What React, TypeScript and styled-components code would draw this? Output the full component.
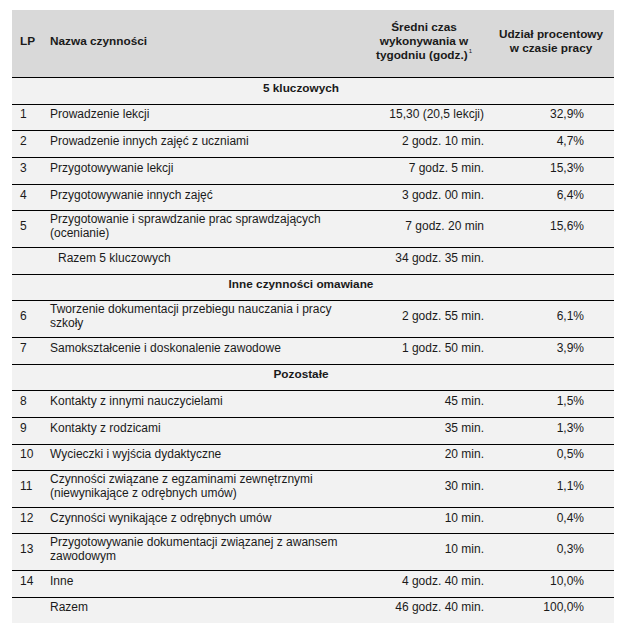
import React from "react";
import styled, { createGlobalStyle } from "styled-components";

const GlobalStyle = createGlobalStyle`
  html, body {
    margin: 0;
    padding: 0;
    background: #ffffff;
  }
  body {
    font-family: "Liberation Sans", Arial, sans-serif;
    color: #1a1a1a;
  }
`;

const Page = styled.div`
  padding: 10px 13px 0 12px;
`;

const Table = styled.div`
  width: 602px;
  display: flex;
  flex-direction: column;
`;

const cols = "38px 310px 128px 126px";

const HeaderRow = styled.div`
  display: grid;
  grid-template-columns: ${cols};
  height: 67px;
  background: #d9d9d9;
  border-bottom: 1px solid #000;
  box-sizing: content-box;
  font-weight: bold;
  font-size: 11.8px;
  line-height: 14.2px;
`;

const HeaderCell = styled.div<{ $align?: "left" | "center"; $pl?: number }>`
  display: flex;
  align-items: center;
  justify-content: ${(p) => (p.$align === "center" ? "center" : "flex-start")};
  text-align: ${(p) => p.$align ?? "left"};
  padding-left: ${(p) => p.$pl ?? 0}px;
  padding-bottom: 5px;
`;

const Sup = styled.sup`
  font-size: 6px;
  font-weight: normal;
  vertical-align: 6px;
  line-height: 0;
  margin-left: 1px;
`;

const BodyRow = styled.div<{ $last?: boolean }>`
  display: grid;
  grid-template-columns: ${cols};
  background: #f2f2f2;
  padding: 2px 0 6.7px;
  border-bottom: ${(p) => (p.$last ? "none" : "1px solid #000")};
  font-size: 12px;
  line-height: 13.4px;
`;

const Cell = styled.div<{ $right?: boolean; $pl?: number; $pr?: number }>`
  display: flex;
  align-items: center;
  min-height: 17px;
  justify-content: ${(p) => (p.$right ? "flex-end" : "flex-start")};
  padding-left: ${(p) => p.$pl ?? 0}px;
  padding-right: ${(p) => p.$pr ?? 0}px;
  white-space: pre-line;
`;

const SectionCell = styled.div`
  grid-column: 1 / -1;
  display: flex;
  align-items: center;
  justify-content: center;
  min-height: 17px;
  padding-right: 24px;
  font-weight: bold;
  font-size: 11.8px;
`;

type Item =
  | { kind: "section"; title: string }
  | { kind: "item"; lp: string; name: string; time: string; pct: string; indent?: boolean };

const data: Item[] = [
  { kind: "section", title: "5 kluczowych" },
  { kind: "item", lp: "1", name: "Prowadzenie lekcji", time: "15,30 (20,5 lekcji)", pct: "32,9%" },
  { kind: "item", lp: "2", name: "Prowadzenie innych zajęć z uczniami", time: "2 godz. 10 min.", pct: "4,7%" },
  { kind: "item", lp: "3", name: "Przygotowywanie lekcji", time: "7 godz. 5 min.", pct: "15,3%" },
  { kind: "item", lp: "4", name: "Przygotowywanie innych zajęć", time: "3 godz. 00 min.", pct: "6,4%" },
  {
    kind: "item",
    lp: "5",
    name: "Przygotowanie i sprawdzanie prac sprawdzających\n(ocenianie)",
    time: "7 godz. 20 min",
    pct: "15,6%",
  },
  { kind: "item", lp: "", name: "Razem 5 kluczowych", time: "34 godz. 35 min.", pct: "", indent: true },
  { kind: "section", title: "Inne czynności omawiane" },
  {
    kind: "item",
    lp: "6",
    name: "Tworzenie dokumentacji przebiegu nauczania i pracy\nszkoły",
    time: "2 godz. 55 min.",
    pct: "6,1%",
  },
  { kind: "item", lp: "7", name: "Samokształcenie i doskonalenie zawodowe", time: "1 godz. 50 min.", pct: "3,9%" },
  { kind: "section", title: "Pozostałe" },
  { kind: "item", lp: "8", name: "Kontakty z innymi nauczycielami", time: "45 min.", pct: "1,5%" },
  { kind: "item", lp: "9", name: "Kontakty z rodzicami", time: "35 min.", pct: "1,3%" },
  { kind: "item", lp: "10", name: "Wycieczki i wyjścia dydaktyczne", time: "20 min.", pct: "0,5%" },
  {
    kind: "item",
    lp: "11",
    name: "Czynności związane z egzaminami zewnętrznymi\n(niewynikające z odrębnych umów)",
    time: "30 min.",
    pct: "1,1%",
  },
  { kind: "item", lp: "12", name: "Czynności wynikające z odrębnych umów", time: "10 min.", pct: "0,4%" },
  {
    kind: "item",
    lp: "13",
    name: "Przygotowywanie dokumentacji związanej z awansem\nzawodowym",
    time: "10 min.",
    pct: "0,3%",
  },
  { kind: "item", lp: "14", name: "Inne", time: "4 godz. 40 min.", pct: "10,0%" },
  { kind: "item", lp: "", name: "Razem", time: "46 godz. 40 min.", pct: "100,0%" },
];

export default function App() {
  return (
    <>
      <GlobalStyle />
      <Page>
        <Table>
          <HeaderRow>
            <HeaderCell $pl={8}>LP</HeaderCell>
            <HeaderCell>Nazwa czynności</HeaderCell>
            <HeaderCell $align="center">
              <span>
                Średni czas
                <br />
                wykonywania w
                <br />
                tygodniu (godz.)<Sup>1</Sup>
              </span>
            </HeaderCell>
            <HeaderCell $align="center">
              <span>
                Udział procentowy
                <br />w czasie pracy
              </span>
            </HeaderCell>
          </HeaderRow>
          {data.map((r, i) =>
            r.kind === "section" ? (
              <BodyRow key={i}>
                <SectionCell>{r.title}</SectionCell>
              </BodyRow>
            ) : (
              <BodyRow key={i} $last={i === data.length - 1}>
                <Cell $pl={8}>{r.lp}</Cell>
                <Cell $pl={r.indent ? 8 : 0}>{r.name}</Cell>
                <Cell $right $pr={4}>
                  {r.time}
                </Cell>
                <Cell $right $pr={30}>
                  {r.pct}
                </Cell>
              </BodyRow>
            )
          )}
        </Table>
      </Page>
    </>
  );
}
